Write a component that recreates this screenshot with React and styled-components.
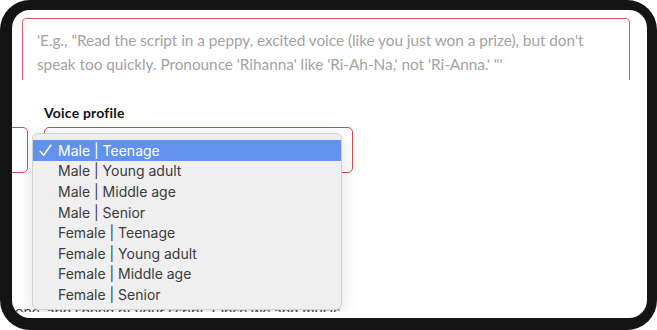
import React from "react";
import styled, { createGlobalStyle } from "styled-components";

const GlobalStyle = createGlobalStyle`
  html, body {
    margin: 0;
    padding: 0;
    background: #ffffff;
  }
  * {
    box-sizing: border-box;
  }
`;

const Frame = styled.div`
  width: 657px;
  height: 330px;
  background: #141414;
  border-radius: 30px;
  padding: 10px 10px 12px 12px;
`;

const Panel = styled.div`
  height: 100%;
  background: #ffffff;
  border-radius: 18px;
  overflow: hidden;
  padding-bottom: 6px;
  display: flex;
  flex-direction: column;
`;

const Scroll = styled.div`
  flex: 1;
  position: relative;
  overflow: hidden;
  font-family: Lato, "Liberation Sans", sans-serif;
`;

const TextareaClip = styled.div`
  margin: 8px 0 0 10px;
  width: 608px;
  height: 62px;
  overflow: hidden;
`;

const Textarea = styled.div`
  height: 120px;
  border: 1px solid #e0575d;
  border-radius: 4px;
  padding: 9px 14px;
  font-size: 15.4px;
  letter-spacing: -0.05px;
  line-height: 24px;
  color: #a3a3a3;
  white-space: nowrap;
`;

const Label = styled.div`
  margin: 24px 0 6px 32px;
  font-size: 14px;
  line-height: 17px;
  font-weight: 700;
  letter-spacing: 0.2px;
  color: #111111;
`;

const Row = styled.div`
  display: flex;
  gap: 16px;
  margin-left: -14px;
`;

const Field = styled.div`
  flex: 0 0 ${p => p.$width}px;
  height: 46px;
  border: 1px solid #d9474e;
  border-radius: 5px;
`;

const Hidden = styled.p`
  margin: 128px 0 0 3px;
  font-size: 15px;
  line-height: 20px;
  color: #4a4a4a;
  white-space: nowrap;
`;

const Menu = styled.div`
  position: absolute;
  left: 20px;
  top: 123px;
  width: 310px;
  padding: 6px 0 4px;
  background: #efefef;
  border: 1px solid #d2d2d2;
  border-radius: 6px;
  box-shadow: 0 4px 18px rgba(0, 0, 0, 0.12);
  font-family: Inter, "Liberation Sans", sans-serif;
`;

const Option = styled.div`
  display: flex;
  align-items: center;
  height: 20.6px;
  padding-left: 6px;
  font-size: 14px;
  color: ${p => (p.$active ? "#ffffff" : "#3b3b3b")};
  background: ${p => (p.$active ? "#6292ee" : "transparent")};
`;

const Check = styled.span`
  display: flex;
  align-items: center;
  width: 19px;
`;

const options = [
  "Male | Teenage",
  "Male | Young adult",
  "Male | Middle age",
  "Male | Senior",
  "Female | Teenage",
  "Female | Young adult",
  "Female | Middle age",
  "Female | Senior"
];

const Tick = () => (
  <svg width="13" height="13" viewBox="0 0 13 13" fill="none">
    <path
      d="M1.2 7.2 L4.6 11.2 L11.8 1.2"
      stroke="#ffffff"
      strokeWidth="1.5"
      strokeLinecap="round"
      strokeLinejoin="round"
    />
  </svg>
);

export default function App() {
  return (
    <>
      <GlobalStyle />
      <Frame>
        <Panel>
          <Scroll>
            <TextareaClip>
              <Textarea>
                'E.g., "Read the script in a peppy, excited voice (like you just
                won a prize), but don't
                <br />
                speak too quickly. Pronounce 'Rihanna' like 'Ri-Ah-Na,' not
                'Ri-Anna.' "'
              </Textarea>
            </TextareaClip>
            <Label>Voice profile</Label>
            <Row>
              <Field $width={30} />
              <Field $width={309} />
            </Row>
            <Hidden>one, and speed of your script. Once we add music</Hidden>
            <Menu>
              {options.map((o, i) => (
                <Option key={o} $active={i === 0}>
                  <Check>{i === 0 && <Tick />}</Check>
                  {o}
                </Option>
              ))}
            </Menu>
          </Scroll>
        </Panel>
      </Frame>
    </>
  );
}
